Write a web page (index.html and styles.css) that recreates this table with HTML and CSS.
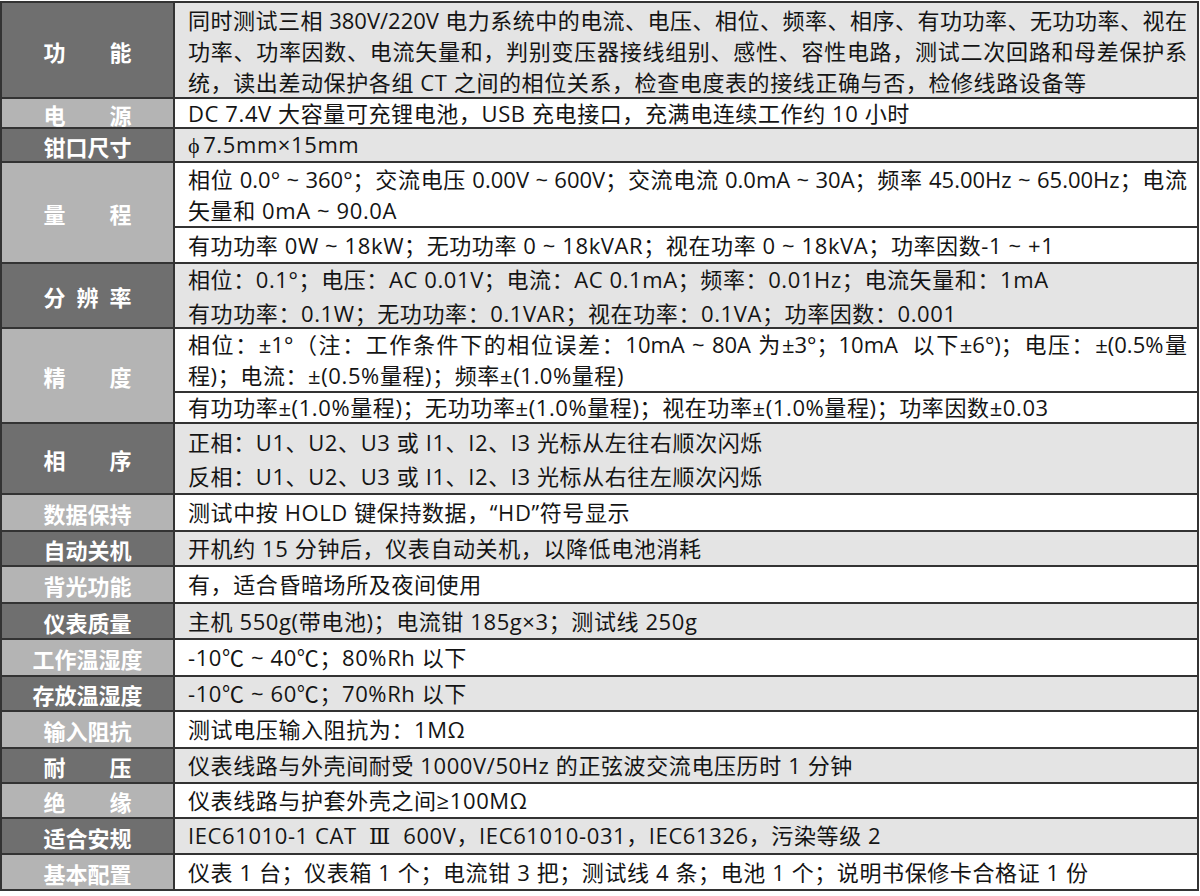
FILE: index.html
```html
<!DOCTYPE html>
<html lang="zh-CN">
<head>
<meta charset="utf-8">
<title>技术参数</title>
<link rel="stylesheet" href="styles.css">
</head>
<body>
<div class="spec">
  <div class="lab dark"><span class="w4"><i>功</i><i>能</i></span></div>
  <div class="val gray"><div class="txt low">
    <p class="j">同时测试三相 380V/220V 电力系统中的电流、电压、相位、频率、相序、有功功率、无功功率、视在</p>
    <p class="j">功率、功率因数、电流矢量和，判别变压器接线组别、感性、容性电路，测试二次回路和母差保护系</p>
    <p>统，读出差动保护各组 CT 之间的相位关系，检查电度表的接线正确与否，检修线路设备等</p>
  </div></div>

  <div class="lab light"><span class="w4"><i>电</i><i>源</i></span></div>
  <div class="val white"><div class="txt"><p>DC 7.4V 大容量可充锂电池，USB 充电接口，充满电连续工作约 10 小时</p></div></div>

  <div class="lab dark"><span class="w4"><i>钳</i><i>口</i><i>尺</i><i>寸</i></span></div>
  <div class="val gray"><div class="txt"><p><span class="phi">ϕ</span>7.5mm×15mm</p></div></div>

  <div class="lab light span2"><span class="w4"><i>量</i><i>程</i></span></div>
  <div class="val white"><div class="txt">
    <p class="j">相位 0.0° ~ 360°；交流电压 0.00V ~ 600V；交流电流 0.0mA ~ 30A；频率 45.00Hz ~ 65.00Hz；电流</p>
    <p>矢量和 0mA ~ 90.0A</p>
  </div></div>
  <div class="val white"><div class="txt"><p>有功功率 0W ~ 18kW；无功功率 0 ~ 18kVAR；视在功率 0 ~ 18kVA；功率因数-1 ~ +1</p></div></div>

  <div class="lab dark"><span class="w4"><i>分</i><i>辨</i><i>率</i></span></div>
  <div class="val gray tall"><div class="txt">
    <p>相位：0.1°；电压：AC 0.01V；电流：AC 0.1mA；频率：0.01Hz；电流矢量和：1mA</p>
    <p>有功功率：0.1W；无功功率：0.1VAR；视在功率：0.1VA；功率因数：0.001</p>
  </div></div>

  <div class="lab light span2"><span class="w4"><i>精</i><i>度</i></span></div>
  <div class="val white"><div class="txt">
    <p class="j">相位：±1°（注：工作条件下的相位误差：10mA ~ 80A 为±3°；10mA&nbsp; 以下±6°)；电压：±(0.5%量</p>
    <p>程)；电流：±(0.5%量程)；频率±(1.0%量程)</p>
  </div></div>
  <div class="val white"><div class="txt"><p>有功功率±(1.0%量程)；无功功率±(1.0%量程)；视在功率±(1.0%量程)；功率因数±0.03</p></div></div>

  <div class="lab dark"><span class="w4"><i>相</i><i>序</i></span></div>
  <div class="val gray tall"><div class="txt">
    <p>正相：U1、U2、U3 或 I1、I2、I3 光标从左往右顺次闪烁</p>
    <p>反相：U1、U2、U3 或 I1、I2、I3 光标从右往左顺次闪烁</p>
  </div></div>

  <div class="lab light"><span class="w4"><i>数</i><i>据</i><i>保</i><i>持</i></span></div>
  <div class="val white"><div class="txt"><p>测试中按 HOLD 键保持数据，“HD”符号显示</p></div></div>

  <div class="lab dark"><span class="w4"><i>自</i><i>动</i><i>关</i><i>机</i></span></div>
  <div class="val gray"><div class="txt"><p>开机约 15 分钟后，仪表自动关机，以降低电池消耗</p></div></div>

  <div class="lab light"><span class="w4"><i>背</i><i>光</i><i>功</i><i>能</i></span></div>
  <div class="val white"><div class="txt"><p>有，适合昏暗场所及夜间使用</p></div></div>

  <div class="lab dark"><span class="w4"><i>仪</i><i>表</i><i>质</i><i>量</i></span></div>
  <div class="val gray"><div class="txt"><p>主机 550g(带电池)；电流钳 185g×3；测试线 250g</p></div></div>

  <div class="lab light"><span>工作温湿度</span></div>
  <div class="val white"><div class="txt"><p>-10℃ ~ 40℃；80%Rh 以下</p></div></div>

  <div class="lab dark"><span>存放温湿度</span></div>
  <div class="val gray"><div class="txt"><p>-10℃ ~ 60℃；70%Rh 以下</p></div></div>

  <div class="lab light"><span class="w4"><i>输</i><i>入</i><i>阻</i><i>抗</i></span></div>
  <div class="val white"><div class="txt"><p>测试电压输入阻抗为：1MΩ</p></div></div>

  <div class="lab dark"><span class="w4"><i>耐</i><i>压</i></span></div>
  <div class="val gray"><div class="txt"><p>仪表线路与外壳间耐受 1000V/50Hz 的正弦波交流电压历时 1 分钟</p></div></div>

  <div class="lab light"><span class="w4"><i>绝</i><i>缘</i></span></div>
  <div class="val white"><div class="txt"><p>仪表线路与护套外壳之间≥100MΩ</p></div></div>

  <div class="lab dark"><span class="w4"><i>适</i><i>合</i><i>安</i><i>规</i></span></div>
  <div class="val gray"><div class="txt"><p>IEC61010-1 CAT <span class="roman">Ⅲ</span> 600V，IEC61010-031，IEC61326，污染等级 2</p></div></div>

  <div class="lab light"><span class="w4"><i>基</i><i>本</i><i>配</i><i>置</i></span></div>
  <div class="val white"><div class="txt"><p>仪表 1 台；仪表箱 1 个；电流钳 3 把；测试线 4 条；电池 1 个；说明书保修卡合格证 1 份</p></div></div>
</div>
</body>
</html>
```
FILE: styles.css
```css
html, body {
  margin: 0;
  padding: 0;
  background: #ffffff;
}

body {
  font-family: "Open Sans", "Noto Sans CJK SC", sans-serif;
  color: #141414;
}

.spec {
  display: grid;
  grid-template-columns: 173px 1024px;
  grid-template-rows: 96px 30px 34px 65px 36px 65px 64px 31px 71px 37px 35px 37px 36px 37px 35px 37px 35px 35px 36px 36px;
  width: 1199px;
  box-sizing: border-box;
  margin-top: 1px;
  border-top: 2px solid #333333;
  border-left: 2px solid #333333;
}

.lab, .val {
  box-sizing: border-box;
  border-right: 2px solid #333333;
  border-bottom: 2px solid #333333;
  display: flex;
  align-items: center;
  font-size: 22px;
}

.lab {
  justify-content: center;
  color: #ffffff;
  font-weight: 700;
  font-family: "Noto Sans CJK SC", sans-serif;
  padding-top: 1px;
}

.lab.span2 {
  grid-row: span 2;
}

.lab .w4 {
  display: inline-flex;
  justify-content: space-between;
  width: 88px;
}

.lab i {
  font-style: normal;
}

.dark { background: #6f6f6f; }
.light { background: #b4b4b4; }
.gray { background: #e4e4e4; }
.white { background: #ffffff; }

.val {
  padding-left: 13px;
  padding-right: 10px;
  line-height: 31px;
  text-spacing-trim: space-all;
}

.val.tall {
  line-height: 34px;
}

.txt {
  width: 100%;
}

.txt.low {
  padding-top: 3px;
}

.txt p {
  margin: 0;
  white-space: nowrap;
  letter-spacing: 0.6px;
}

.txt p.j {
  white-space: normal;
  letter-spacing: 0;
  text-align: justify;
  text-align-last: justify;
  text-justify: inter-character;
}

.phi {
  font-family: "Liberation Serif", serif;
  margin-right: 3px;
}

.roman {
  font-family: "DejaVu Serif", serif;
  margin: 0 6px;
}
```
